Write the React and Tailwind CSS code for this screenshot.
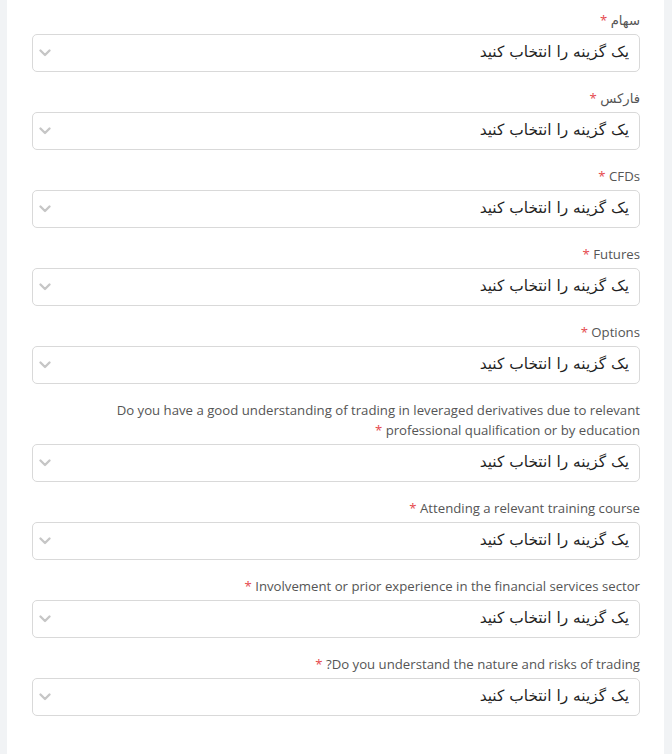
import React from 'react';

const fields = [
  'سهام',
  'فارکس',
  'CFDs',
  'Futures',
  'Options',
  'Do you have a good understanding of trading in leveraged derivatives due to relevant professional qualification or by education',
  'Attending a relevant training course',
  'Involvement or prior experience in the financial services sector',
  'Do you understand the nature and risks of trading?',
];

function Chevron() {
  return (
    <svg width="12" height="8" viewBox="0 0 12 8" fill="none">
      <path d="M1.5 1.5L6 6L10.5 1.5" stroke="#c6c6c6" strokeWidth="2.3" strokeLinecap="round" strokeLinejoin="round" />
    </svg>
  );
}

function SelectField({ label }) {
  return (
    <div className="mb-4">
      <label className="block max-w-[580px] text-[13.2px] leading-5 text-[#555555] mb-1 text-right">
        {label} <span className="text-[#e5484d]">*</span>
      </label>
      <div className="h-[38px] rounded-[5px] border border-[#d9d9d9] bg-white flex items-center justify-between pr-[10px] pl-[6px] cursor-pointer">
        <span className="text-[15.4px] text-[#1f1f1f]" style={{ fontFamily: '"DejaVu Sans", sans-serif' }}>یک گزینه را انتخاب کنید</span>
        <Chevron />
      </div>
    </div>
  );
}

export default function App() {
  return (
    <div className="min-h-screen bg-[#f1f3f5] pl-[7px] pr-[8px]" style={{ fontFamily: '"Open Sans", "DejaVu Sans", sans-serif' }}>
      <div dir="rtl" className="bg-white min-h-[754px] pl-[25px] pr-[24px] pt-[10px]">
        {fields.map((f) => (
          <SelectField key={f} label={f} />
        ))}
      </div>
    </div>
  );
}
